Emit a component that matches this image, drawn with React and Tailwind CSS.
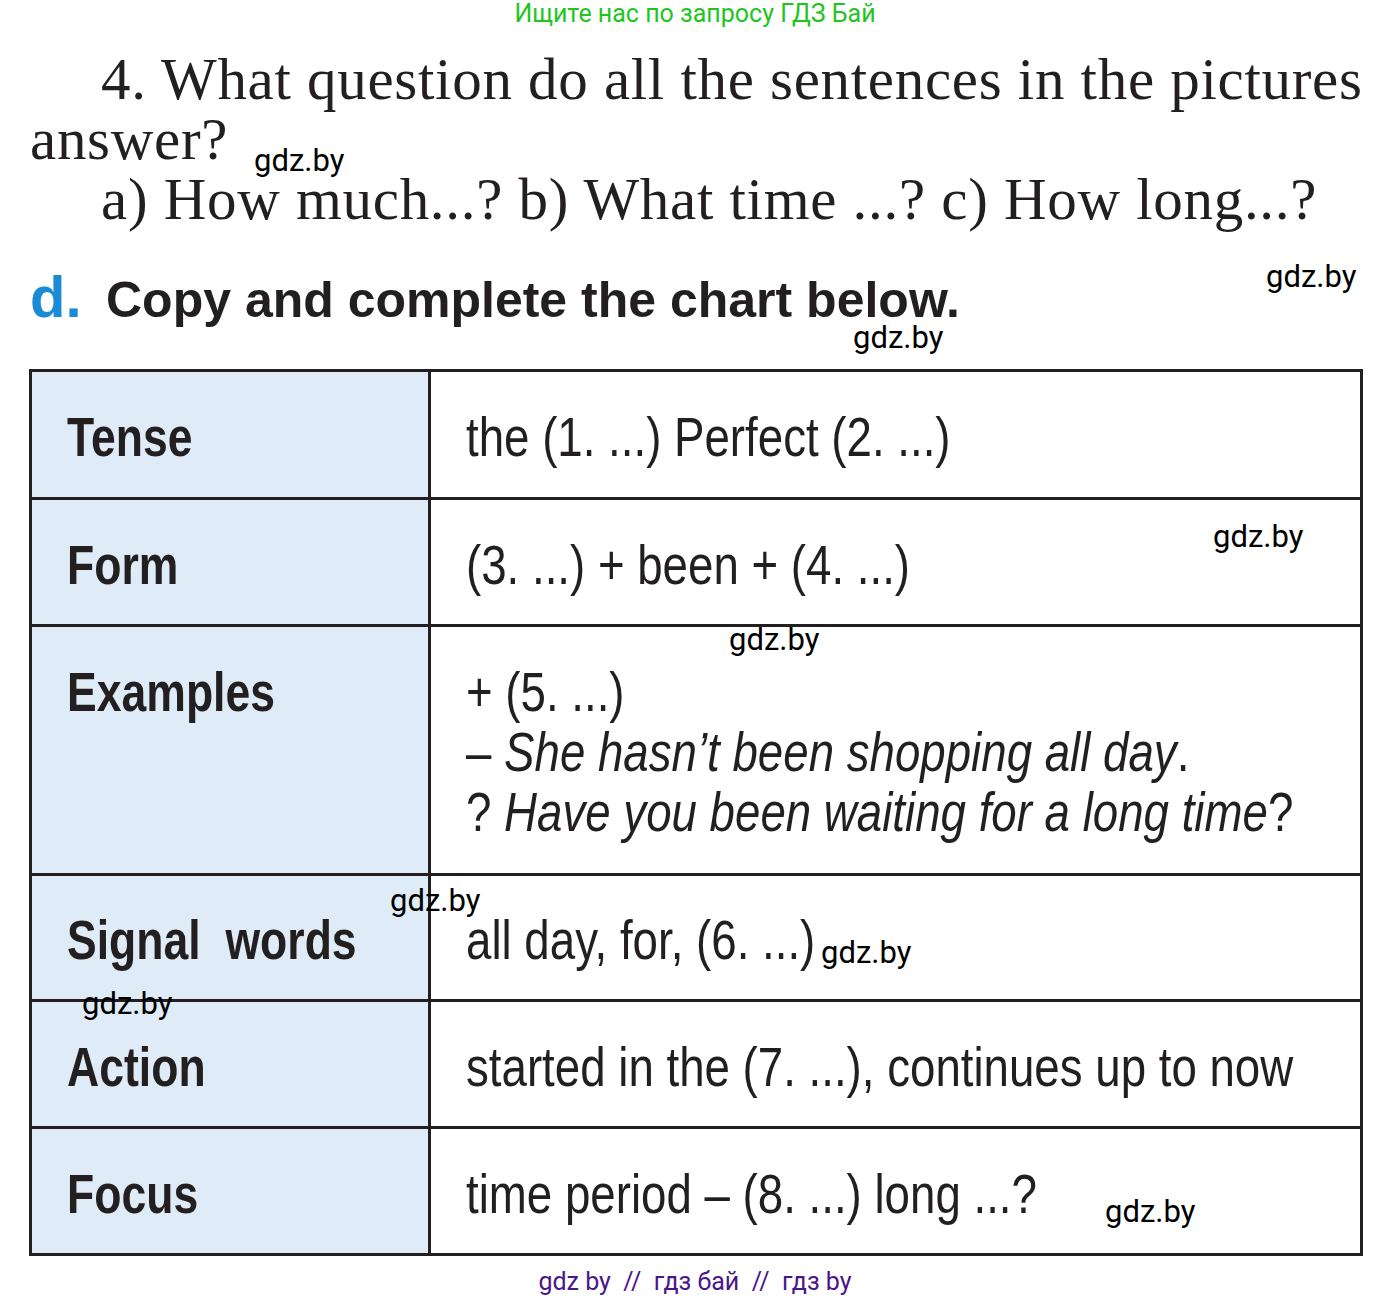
import React from "react";

const serif = { fontFamily: '"Liberation Serif", "DejaVu Serif", serif' };
const roboto = { fontFamily: 'Roboto, "Liberation Sans", sans-serif' };
const sans = { fontFamily: '"Liberation Sans", Arial, sans-serif' };

function Mark({ className }) {
  return (
    <span
      className={`absolute text-[31px] leading-[30px] text-black whitespace-nowrap ${className}`}
      style={roboto}
    >
      gdz.by
    </span>
  );
}

function Row({ label, children, h, last, top }) {
  const align = top ? "items-start pt-[35px]" : "items-center pt-[5px]";
  return (
    <div className={`flex ${h} ${last ? "" : "border-b-[3px] border-[#231f20]"}`}>
      <div
        className={`w-[399px] shrink-0 bg-[#dfebf7] border-r-[3px] border-[#231f20] pl-[35px] flex ${align}`}
      >
        <span className="inline-block origin-left scale-x-[0.81] text-[55px] leading-[60px] font-bold text-[#231f20] whitespace-pre">
          {label}
        </span>
      </div>
      <div className={`flex-1 pl-[35px] flex ${align}`}>
        <div className="inline-block origin-left scale-x-[0.83] text-[55px] leading-[60px] text-[#231f20] whitespace-nowrap">
          {children}
        </div>
      </div>
    </div>
  );
}

export default function App() {
  return (
    <div className="relative w-[1390px] h-[1300px] bg-white overflow-hidden">
      <div className="text-center text-[25px] leading-[27px] text-[#22c422]" style={roboto}>
        Ищите нас по запросу ГДЗ Бай
      </div>

      <div
        className="pl-[30px] pt-[22px] text-[59px] leading-[60px] tracking-[0.7px] text-[#231f20]"
        style={serif}
      >
        <div className="pl-[71px] whitespace-nowrap">
          4. What question do all the sentences in the pictures
        </div>
        <div className="whitespace-nowrap">answer?</div>
        <div className="pl-[71px] whitespace-nowrap">
          a) How much...? b) What time ...? c) How long...?
        </div>
      </div>

      <div className="flex items-baseline pl-[30px] mt-[38px] whitespace-nowrap" style={sans}>
        <span className="text-[58px] leading-[60px] font-bold text-[#1c8bd5] w-[76px]">d.</span>
        <span className="text-[50px] leading-[60px] font-bold text-[#231f20]">
          Copy and complete the chart below.
        </span>
      </div>

      <div className="ml-[29px] mt-[39px] w-[1334px] border-[3px] border-[#231f20]" style={sans}>
        <Row label="Tense" h="h-[128px]">the (1. ...) Perfect (2. ...)</Row>
        <Row label="Form" h="h-[127px]">(3. ...) + been + (4. ...)</Row>
        <Row label="Examples" h="h-[249px]" top>
          <div>+ (5. ...)</div>
          <div>
            – <i>She hasn’t been shopping all day</i>.
          </div>
          <div>
            ? <i>Have you been waiting for a long time</i>?
          </div>
        </Row>
        <Row label={"Signal  words"} h="h-[126px]">all day, for, (6. ...)</Row>
        <Row label="Action" h="h-[127px]">started in the (7. ...), continues up to now</Row>
        <Row label="Focus" h="h-[124px]" last>time period – (8. ...) long ...?</Row>
      </div>

      <div
        className="absolute left-0 right-0 top-[1268px] text-center text-[25px] leading-[27px] text-[#4b1688] whitespace-pre"
        style={roboto}
      >
        {"gdz by  //  гдз бай  //  гдз by"}
      </div>

      <Mark className="left-[254px] top-[146px]" />
      <Mark className="left-[1266px] top-[262px]" />
      <Mark className="left-[853px] top-[323px]" />
      <Mark className="left-[1213px] top-[522px]" />
      <Mark className="left-[729px] top-[625px]" />
      <Mark className="left-[390px] top-[886px]" />
      <Mark className="left-[821px] top-[938px]" />
      <Mark className="left-[82px] top-[989px]" />
      <Mark className="left-[1105px] top-[1197px]" />
    </div>
  );
}
